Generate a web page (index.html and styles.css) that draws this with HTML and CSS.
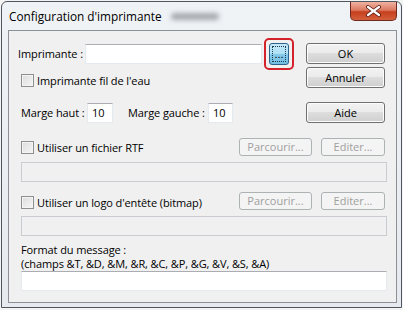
FILE: index.html
```html
<!doctype html>
<html>
<head>
<meta charset="utf-8">
<title>Configuration d'imprimante</title>
<link rel="stylesheet" href="styles.css">
</head>
<body>

<div class="window">
  <div class="titlebar">
    <span class="title">Configuration d'imprimante</span>
    <span class="title-smudge"></span>
    <span class="close">
      <svg width="45" height="18" viewBox="0 0 45 18">
        <path d="M17 5 L28 13 M28 5 L17 13" stroke="#5a1a10" stroke-width="4" stroke-linecap="round"/>
        <path d="M17 5 L28 13 M28 5 L17 13" stroke="#fff" stroke-width="2.2" stroke-linecap="round"/>
      </svg>
    </span>
  </div>

  <div class="client">
    <div class="row row-top">
      <span class="lbl lbl-printer">Imprimante :</span>
      <input class="field field-printer" type="text">
      <span class="focus-ring"><button class="btn-browse"><span class="dots">...</span></button></span>
      <button class="btn btn-main">OK</button>
    </div>

    <div class="row row-stream">
      <label class="check"><span class="box"></span>Imprimante fil de l'eau</label>
      <button class="btn btn-main">Annuler</button>
    </div>

    <div class="row row-margins">
      <span class="lbl lbl-top">Marge haut :</span>
      <input class="field field-num field-top" type="text" value="10">
      <span class="lbl lbl-left">Marge gauche :</span>
      <input class="field field-num field-left" type="text" value="10">
      <button class="btn btn-main">Aide</button>
    </div>

    <div class="row row-option">
      <label class="check"><span class="box"></span>Utiliser un fichier RTF</label>
      <button class="btn btn-small btn-browse-file" disabled>Parcourir...</button>
      <button class="btn btn-small btn-edit" disabled>Editer...</button>
    </div>
    <input class="field field-wide" type="text" disabled>

    <div class="row row-option row-logo">
      <label class="check"><span class="box"></span>Utiliser un logo d'entête (bitmap)</label>
      <button class="btn btn-small btn-browse-file" disabled>Parcourir...</button>
      <button class="btn btn-small btn-edit" disabled>Editer...</button>
    </div>
    <input class="field field-wide" type="text" disabled>

    <div class="msg-label">
      <div>Format du message :</div>
      <div>(champs &amp;T, &amp;D, &amp;M, &amp;R, &amp;C, &amp;P, &amp;G, &amp;V, &amp;S, &amp;A)</div>
    </div>
    <input class="field field-wide field-msg" type="text">
  </div>
</div>

</body>
</html>
```

FILE: styles.css
```css
body {
  margin: 1px;
  background: #f4f4f4;
  font: 11px "Open Sans", "DejaVu Sans", sans-serif;
  letter-spacing: -0.1px;
  color: #000;
}

.window {
  border: 1px solid #4f5660;
  border-radius: 6px 6px 0 0;
  background: linear-gradient(180deg, #f0f3f6 0%, #e6eaee 100%);
  padding-bottom: 4px;
}

/* title bar */

.titlebar {
  height: 28px;
  display: flex;
  align-items: center;
  padding-left: 7px;
}

.title {
  white-space: nowrap;
  font-size: 11.8px;
  letter-spacing: 0;
}

.title-smudge {
  width: 48px;
  height: 7px;
  margin-left: 9px;
  background: #a4a8ad;
  border-radius: 4px;
  filter: blur(2.5px);
}

.close {
  align-self: flex-start;
  margin-left: auto;
  margin-right: 4px;
  width: 45px;
  height: 18px;
  border: 1px solid #6e2a1e;
  border-top: none;
  border-radius: 0 0 5px 5px;
  background: linear-gradient(180deg, #efb2a0 0%, #dc7a62 45%, #c63f1e 55%, #d4603c 100%);
  display: flex;
}

/* client area */

.client {
  margin: 0 4px 0 6px;
  border: 1px solid #8d9197;
  background: #f0f0f0;
  padding: 12px 9px 11px 12px;
}

.row {
  display: flex;
  align-items: center;
}

.row-top {
  height: 21px;
}

.row-stream {
  height: 21px;
  margin-top: 3px;
  align-items: flex-end;
}

.row-margins {
  height: 21px;
  margin-top: 14px;
}

.row-option {
  height: 18px;
  margin-top: 15px;
}

.row-logo {
  margin-top: 10px;
}

.row-logo .check {
  margin-top: 3px;
}

.lbl {
  white-space: nowrap;
}

.lbl-printer {
  width: 67px;
  margin-left: -3px;
}

.lbl-top {
  width: 66px;
}

.lbl-left {
  width: 80px;
  margin-left: 15px;
}

/* text fields */

.field {
  box-sizing: border-box;
  height: 20px;
  border: 1px solid #e3e9ef;
  border-top-color: #abadb3;
  background: #fff;
  font: inherit;
  padding: 0 5px;
  margin: 0;
  outline: none;
}

.field-printer {
  width: 177px;
}

.field-num {
  padding: 0 4px;
}

.field-top {
  width: 26px;
}

.field-left {
  width: 25px;
}

.field-wide {
  display: block;
  width: 100%;
  margin-top: 6px;
}

.field-wide:disabled {
  background: #f0f0f0;
  border-color: #c9ccd0;
}

.field-msg {
  margin-top: 0;
}

.msg-label {
  margin-top: 7px;
  line-height: 14px;
}

/* checkboxes */

.check {
  display: flex;
  align-items: center;
  white-space: nowrap;
}

.box {
  box-sizing: border-box;
  width: 13px;
  height: 13px;
  margin-right: 3px;
  border: 1px solid #8e8f8f;
  background: linear-gradient(135deg, #dcdcdc 0%, #f6f6f6 100%);
  box-shadow: inset 0 0 0 1px #f4f4f4;
}

/* buttons */

.btn {
  box-sizing: border-box;
  font: inherit;
  color: #000;
  border: 1px solid #707070;
  border-radius: 3px;
  background: linear-gradient(180deg, #f2f2f2 0%, #ebebeb 49%, #dddddd 50%, #cfcfcf 100%);
  box-shadow: inset 0 0 0 1px #fcfcfc;
  padding: 0;
}

.btn-main {
  width: 79px;
  height: 21px;
  margin-left: auto;
  margin-right: 2px;
}

.btn-small {
  height: 18px;
  line-height: 14px;
}

.btn:disabled {
  color: #a0a0a0;
  border-color: #adb2b5;
  background: #f4f4f4;
  box-shadow: none;
}

.btn-browse-file {
  width: 73px;
  margin-left: auto;
}

.btn-edit {
  width: 64px;
  margin-left: 9px;
  margin-right: 2px;
}

/* highlighted "..." button */

.focus-ring {
  display: flex;
  margin: -5px 0 -5px 2px;
  padding: 3px;
  border: 2px solid #d3222c;
  border-radius: 5px;
}

.btn-browse {
  box-sizing: border-box;
  width: 20px;
  height: 22px;
  padding: 0;
  border: 1px solid #2c628b;
  border-radius: 3px;
  background: linear-gradient(180deg, #c4e8f8 0%, #ade0f5 50%, #86cbec 51%, #72bde2 100%);
  outline: 1px dotted #1c3c50;
  outline-offset: -4px;
  display: flex;
  align-items: flex-end;
  justify-content: center;
}

.dots {
  font-size: 11px;
  line-height: 11px;
  padding-bottom: 4px;
  color: #000;
}
```
